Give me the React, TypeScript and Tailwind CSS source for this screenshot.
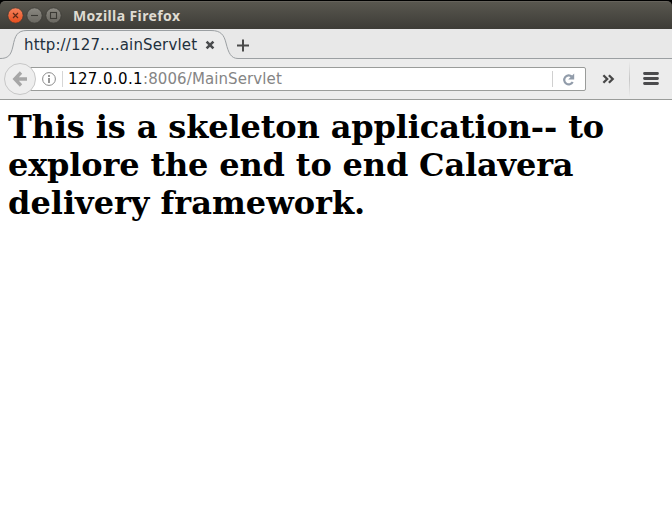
import React from "react";

function WindowButton({ close = false, children }: { close?: boolean; children: React.ReactNode }) {
  return (
    <svg width="17" height="17" viewBox="0 0 17 17" className="shrink-0">
      <defs>
        <linearGradient id="orange" x1="0" y1="0" x2="0" y2="1">
          <stop offset="0" stopColor="#f5835d" />
          <stop offset="1" stopColor="#e64d1c" />
        </linearGradient>
        <linearGradient id="grey" x1="0" y1="0" x2="0" y2="1">
          <stop offset="0" stopColor="#8b8982" />
          <stop offset="1" stopColor="#6a6861" />
        </linearGradient>
      </defs>
      <circle cx="8.5" cy="8.5" r="7.7" fill={close ? "url(#orange)" : "url(#grey)"} stroke="#3b3a35" strokeWidth="0.8" />
      {children}
    </svg>
  );
}

function TitleBar() {
  return (
    <div className="h-[29px] bg-black pt-px">
      <header className="flex h-7 items-center gap-[2px] rounded-t-[5px] border-t border-[#66635c] bg-linear-to-b from-[#59574f] to-[#3d3c37] pl-[7px]">
        <WindowButton close>
          <path d="M6 6l5 5M11 6l-5 5" stroke="#5d2a17" strokeWidth="1.2" />
        </WindowButton>
        <WindowButton>
          <path d="M5 8.5h7" stroke="#3b3a35" strokeWidth="1.1" />
        </WindowButton>
        <WindowButton>
          <rect x="5.5" y="5.5" width="6" height="6" fill="none" stroke="#3b3a35" strokeWidth="1.1" />
        </WindowButton>
        <h1 className="ml-[9px] font-['Noto_Sans',sans-serif] text-[14px] leading-5 font-bold tracking-[0.4px] whitespace-nowrap text-[#dfdbd2]">
          Mozilla Firefox
        </h1>
      </header>
    </div>
  );
}

function TabStrip() {
  return (
    <div className="relative h-[30px] bg-[#e8e8e8]">
      <svg width="672" height="30" className="absolute top-0 left-0">
        <path
          d="M0 29.5C8 29.5 11 26.5 13 17C15 7 17 1.5 27 1.5H211C221 1.5 224 6 226 14C228.5 24 231 29.5 238 29.5H672V30H0Z"
          fill="#ececec"
        />
        <path
          d="M0 29.5C8 29.5 11 26.5 13 17C15 7 17 1.5 27 1.5H211C221 1.5 224 6 226 14C228.5 24 231 29.5 238 29.5H672"
          fill="none"
          stroke="#9b9fa2"
        />
      </svg>
      <div className="relative flex h-[30px] items-center pl-6">
        <span className="mt-[2px] w-[181px] font-['DejaVu_Sans',sans-serif] text-[15px] leading-5 tracking-[0.15px] whitespace-nowrap text-[#22303c]">
          http://127....ainServlet
        </span>
        <svg width="10" height="10" viewBox="0 0 10 10" className="mt-[2px]">
          <path d="M1.6 1.6l6.8 6.8M8.4 1.6l-6.8 6.8" stroke="#4a4c4e" strokeWidth="2.6" />
        </svg>
        <svg width="13" height="13" viewBox="0 0 13 13" className="mt-[2px] ml-[22px]">
          <path d="M6 .5v12M0 6.5h12" stroke="#4a4a4a" strokeWidth="2" />
        </svg>
      </div>
    </div>
  );
}

function AddressBar() {
  return (
    <div className="flex h-[41px] items-center border-b border-[#9a9c9a] bg-[#ececec] pl-[3px]">
      <svg width="34" height="34" viewBox="0 0 34 34" className="relative z-10 shrink-0">
        <circle cx="17" cy="17" r="15.5" fill="#eeeeee" stroke="#c7c7c7" />
        <path d="M18 10.5L11.8 17L18 23.5M12.5 17H24" fill="none" stroke="#a6a6a6" strokeWidth="3.3" />
      </svg>
      <div className="-ml-[10px] flex h-6 w-[559px] shrink-0 items-center rounded-[2px] border border-[#9a9c9a] bg-white pl-[14px]">
        <svg width="14" height="14" viewBox="0 0 14 14" className="shrink-0">
          <circle cx="7" cy="7" r="6.4" fill="none" stroke="#8b8b8b" />
          <path d="M7 6v5M7 3v2" stroke="#858585" strokeWidth="1.7" />
        </svg>
        <span className="ml-[6px] h-4 w-px bg-[#d6d6d6]" />
        <span className="ml-[5px] font-['DejaVu_Sans',sans-serif] text-[15px] leading-5 tracking-[0.1px] whitespace-nowrap text-[#858585]">
          <span className="tracking-[0.38px] text-black">127.0.0.1</span>:8006/MainServlet
        </span>
        <span className="ml-auto h-4 w-px bg-[#d0d0d0]" />
        <svg width="13" height="13" viewBox="0 0 13 13" className="mr-[10px] ml-[9px]">
          <path d="M9.8 3.6A4.5 4.5 0 1 0 10.7 9" fill="none" stroke="#919caa" strokeWidth="2.2" />
          <path d="M12.2 .5V6.5H6.2Z" fill="#919caa" />
        </svg>
      </div>
      <svg width="13" height="10" viewBox="0 0 13 10" className="ml-[16px] shrink-0">
        <path d="M1.4 1.2l3.8 3.8-3.8 3.8M6.9 1.2l3.8 3.8-3.8 3.8" fill="none" stroke="#484848" strokeWidth="2.3" />
      </svg>
      <span className="ml-[14px] h-9 w-px bg-linear-to-b from-[#ececec] via-[#c6c6c6] to-[#ececec]" />
      <svg width="16" height="14" viewBox="0 0 16 14" className="ml-[13px] shrink-0">
        <path d="M1.5 1.5h13M1.5 6.5h13M1.5 11.5h13" stroke="#4b4b4d" strokeWidth="2.8" strokeLinecap="round" />
      </svg>
    </div>
  );
}

export default function App() {
  return (
    <div className="flex h-[514px] w-[672px] flex-col overflow-hidden bg-white">
      <TitleBar />
      <TabStrip />
      <AddressBar />
      <main className="px-2 pt-2">
        <h2 className="font-['DejaVu_Serif',serif] text-[32px] leading-[38px] font-bold whitespace-nowrap text-black">
          <span className="tracking-[-0.13px]">This is a skeleton application-- to</span>
          <br />
          <span className="tracking-[-0.16px]">explore the end to end Calavera</span>
          <br />
          delivery framework.
        </h2>
      </main>
    </div>
  );
}
